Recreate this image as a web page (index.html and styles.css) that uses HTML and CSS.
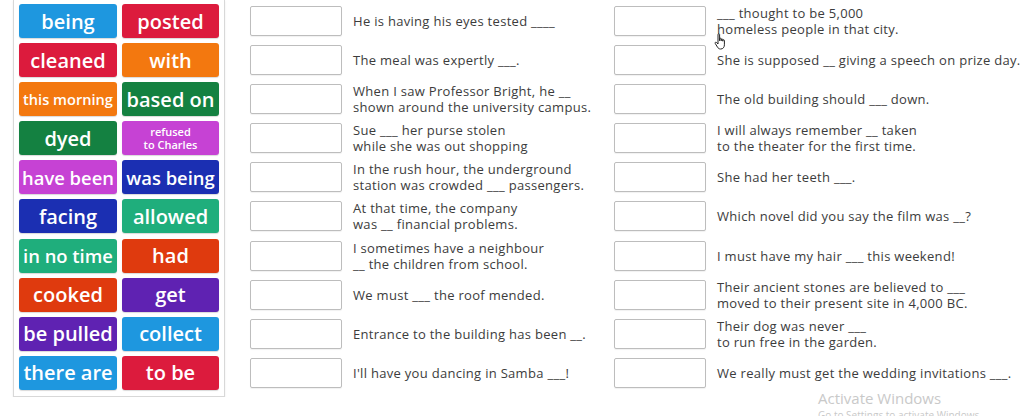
FILE: index.html
```html
<!DOCTYPE html>
<html lang="en">
<head>
  <meta charset="UTF-8">
  <title>Match up</title>
  <link rel="stylesheet" href="styles.css">
</head>
<body>

<div class="page">
  <div class="bank">
    <div class="tile blue">being</div>
    <div class="tile red">posted</div>
    <div class="tile red">cleaned</div>
    <div class="tile orange">with</div>
    <div class="tile orange small">this morning</div>
    <div class="tile green">based on</div>
    <div class="tile green">dyed</div>
    <div class="tile magenta tiny">refused<br>to Charles</div>
    <div class="tile magenta fit">have been</div>
    <div class="tile navy fit">was being</div>
    <div class="tile navy">facing</div>
    <div class="tile teal">allowed</div>
    <div class="tile teal fit">in no time</div>
    <div class="tile rust">had</div>
    <div class="tile rust">cooked</div>
    <div class="tile purple">get</div>
    <div class="tile purple">be pulled</div>
    <div class="tile blue">collect</div>
    <div class="tile blue">there are</div>
    <div class="tile red">to be</div>
  </div>

  <div class="questions">
    <div class="column first">
      <div class="row"><div class="drop"></div><div class="prompt">He is having his eyes tested ____</div></div>
      <div class="row"><div class="drop"></div><div class="prompt">The meal was expertly ___.</div></div>
      <div class="row"><div class="drop"></div><div class="prompt">When I saw Professor Bright, he __<br>shown around the university campus.</div></div>
      <div class="row"><div class="drop"></div><div class="prompt">Sue ___ her purse stolen<br>while she was out shopping</div></div>
      <div class="row"><div class="drop"></div><div class="prompt">In the rush hour, the underground<br>station was crowded ___ passengers.</div></div>
      <div class="row"><div class="drop"></div><div class="prompt">At that time, the company<br>was __ financial problems.</div></div>
      <div class="row"><div class="drop"></div><div class="prompt">I sometimes have a neighbour<br>__ the children from school.</div></div>
      <div class="row"><div class="drop"></div><div class="prompt">We must ___ the roof mended.</div></div>
      <div class="row"><div class="drop"></div><div class="prompt">Entrance to the building has been __.</div></div>
      <div class="row"><div class="drop"></div><div class="prompt">I'll have you dancing in Samba ___!</div></div>
    </div>
    <div class="column">
      <div class="row"><div class="drop"></div><div class="prompt">___ thought to be 5,000<br>homeless people in that city.</div></div>
      <div class="row"><div class="drop"></div><div class="prompt">She is supposed __ giving a speech on prize day.</div></div>
      <div class="row"><div class="drop"></div><div class="prompt">The old building should ___ down.</div></div>
      <div class="row"><div class="drop"></div><div class="prompt">I will always remember __ taken<br>to the theater for the first time.</div></div>
      <div class="row"><div class="drop"></div><div class="prompt">She had her teeth ___.</div></div>
      <div class="row"><div class="drop"></div><div class="prompt">Which novel did you say the film was __?</div></div>
      <div class="row"><div class="drop"></div><div class="prompt">I must have my hair ___ this weekend!</div></div>
      <div class="row"><div class="drop"></div><div class="prompt">Their ancient stones are believed to ___<br>moved to their present site in 4,000 BC.</div></div>
      <div class="row"><div class="drop"></div><div class="prompt">Their dog was never ___<br>to run free in the garden.</div></div>
      <div class="row"><div class="drop"></div><div class="prompt">We really must get the wedding invitations ___.</div></div>
    </div>
  </div>
</div>

<svg class="cursor" width="14" height="18" viewBox="0 0 14 18">
  <path d="M4 1.5c0-.8 1.6-.8 1.6 0v6.2V5.8c0-.8 1.6-.8 1.6 0v2V6.6c0-.8 1.6-.8 1.6 0v1.6-.8c0-.8 1.6-.8 1.6 0v4.4c0 2.4-1.4 4.2-3.6 4.2H6.4c-1.4 0-2.2-.8-3-2L1.2 10.4c-.5-.8.5-1.6 1.2-1L4 11V1.5z" fill="#fff" stroke="#222" stroke-width="1" stroke-linejoin="round"/>
</svg>

<div class="watermark">
  <div class="wm-title">Activate Windows</div>
  <div class="wm-sub">Go to Settings to activate Windows.</div>
</div>

</body>
</html>
```

FILE: styles.css
```css
body {
  margin: 0;
  background-color: #fff;
  font-family: "Open Sans", Arial, sans-serif;
  color: #3c3c3c;
  overflow: hidden;
}
.page {
  display: flex;
  align-items: flex-start;
  padding-left: 13px;
}
.bank {
  display: grid;
  grid-template-columns: 98px 97px;
  grid-auto-rows: 34px;
  column-gap: 5px;
  row-gap: 5.1px;
  padding: 4px 5px 6px 5px;
  border: 1px solid #d8d8d8;
  border-top: none;
  box-shadow: 0 1px 2px rgba(0, 0, 0, 0.08);
  background-color: #fff;
}
.tile {
  display: flex;
  align-items: center;
  justify-content: center;
  text-align: center;
  border-radius: 3px;
  color: #fff;
  font-size: 20px;
  font-weight: 600;
  white-space: nowrap;
  box-shadow: 0 1px 1px rgba(0, 0, 0, 0.15);
}
.tile.fit {
  font-size: 18.4px;
}
.tile.small {
  font-size: 14.6px;
}
.tile.tiny {
  font-size: 11px;
  line-height: 13px;
}
.blue { background-color: #1e97df; }
.red { background-color: #dc1b3d; }
.orange { background-color: #f3780f; }
.green { background-color: #148141; }
.magenta { background-color: #c642d4; }
.navy { background-color: #1b2fb2; }
.teal { background-color: #1fae7c; }
.rust { background-color: #df3a0e; }
.purple { background-color: #5f22b2; }

.questions {
  display: flex;
  margin-left: 25px;
  padding-top: 4px;
}
.column {
  display: flex;
  flex-direction: column;
  row-gap: 5.1px;
}
.column.first {
  width: 364px;
}
.row {
  display: flex;
  align-items: center;
  column-gap: 11px;
  height: 34px;
}
.drop {
  flex: none;
  width: 90px;
  height: 28px;
  border: 1px solid #bdbdbd;
  border-radius: 2px;
  background-color: #fff;
  box-shadow: 0 1px 1px rgba(0, 0, 0, 0.06);
}
.prompt {
  font-size: 13px;
  line-height: 16px;
  letter-spacing: 0.3px;
  white-space: nowrap;
}

.cursor {
  position: absolute;
  left: 714px;
  top: 33px;
}
.watermark {
  position: absolute;
  left: 818px;
  top: 388px;
  color: #c9c9c9;
  font-family: "Open Sans", sans-serif;
}
.wm-title {
  font-size: 15px;
  line-height: 20px;
}
.wm-sub {
  font-size: 10px;
  line-height: 14px;
}
```
